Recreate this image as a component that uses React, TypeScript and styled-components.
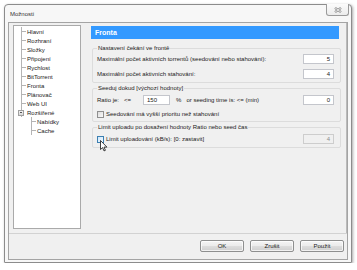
import React from 'react';
import styled, {createGlobalStyle} from 'styled-components';

const GlobalStyle = createGlobalStyle`
  * { box-sizing: border-box; }
  body {
    margin: 0;
    background: #fff;
    font-family: "Liberation Sans", Arial, sans-serif;
    font-size: 6px;
    color: #222;
  }
`;

const Page = styled.div`
  padding: 4px 0 0 4px;
`;

const Window = styled.div`
  width: 348px;
  height: 259px;
  border: 1px solid #8c8c8c;
  border-radius: 4px 4px 1px 1px;
  background: #f7f7f7;
  box-shadow: 1px 1px 3px rgba(0, 0, 0, .35);
  display: flex;
  flex-direction: column;
`;

const TitleBar = styled.div`
  height: 17px;
  display: flex;
  align-items: flex-start;
  padding-left: 5px;
  > .title {
    margin-top: 6px;
    line-height: 7px;
    color: #333;
  }
`;

const CloseButton = styled.div`
  margin-left: auto;
  margin-right: 2px;
  margin-top: -1px;
  width: 23px;
  height: 12px;
  border: 1px solid #9a9a9a;
  border-top: none;
  border-radius: 0 0 3px 3px;
  background: linear-gradient(#fbfbfb, #ececec);
  display: flex;
  align-items: center;
  justify-content: center;
`;

const Client = styled.div`
  flex: 1;
  margin: 0 3px 2px 3px;
  border: 1px solid #a4a4a4;
  background: #f0f0f0;
  display: flex;
  flex-direction: column;
`;

const Main = styled.div`
  height: 211px;
  display: flex;
  border-bottom: 1px solid #d2d2d2;
`;

const Tree = styled.div`
  width: 68px;
  margin: 2px 0 4px 4px;
  background: #fff;
  border: 1px solid #aaa;
  padding-top: 1px;
`;

const Branch = styled.div<{$indent: number}>`
  margin-left: ${p => p.$indent}px;
  border-left: 1px solid #b4b4b4;
`;

const TreeRow = styled.div`
  height: 9px;
  display: flex;
  align-items: center;
  white-space: nowrap;
`;

const Stub = styled.span`
  width: 4px;
  height: 1px;
  background: #b4b4b4;
  margin-right: 1px;
`;

const Expander = styled.span`
  width: 6px;
  height: 6px;
  margin-left: -4px;
  margin-right: 3px;
  border: 1px solid #a0a0a0;
  background: linear-gradient(#f4f4f4, #d8d8d8);
  display: flex;
  align-items: center;
  justify-content: center;
  &::after {
    content: "";
    width: 2px;
    height: 1px;
    background: #555;
  }
`;

const Content = styled.div`
  flex: 1;
  margin-left: 6px;
  padding: 3px 7px 0 4px;
  border-right: 1px solid #bababa;
`;

const Header = styled.div`
  height: 13px;
  background: #3399ff;
  color: #fff;
  font-weight: bold;
  font-size: 7px;
  line-height: 13px;
  padding-left: 4px;
`;

const Group = styled.fieldset<{$top: number}>`
  margin: ${p => p.$top}px -2px 0 1px;
  border: 1px solid #dcdcdc;
  border-radius: 2px;
  padding: 0 6px 3px 4px;
  min-inline-size: 0;
  > legend {
    padding: 0 1px;
    line-height: 8px;
    font-size: 6px;
  }
`;

const Rows = styled.div<{$top: number}>`
  display: flex;
  flex-direction: column;
  gap: 5px;
  padding-top: ${p => p.$top}px;
`;

const Row = styled.div`
  display: flex;
  align-items: center;
  min-height: 8px;
  white-space: nowrap;
`;

const Spin = styled.div<{$width?: number; $left?: boolean; $disabled?: boolean}>`
  width: ${p => p.$width ?? 31}px;
  height: 10px;
  margin-left: auto;
  border: 1px solid ${p => (p.$disabled ? '#cdcdcd' : '#c4c6cc')};
  background: ${p => (p.$disabled ? '#f0f0f0' : '#fff')};
  color: ${p => (p.$disabled ? '#8d8d8d' : '#222')};
  text-align: ${p => (p.$left ? 'left' : 'right')};
  padding: 0 3px;
  line-height: 8px;
`;

const RatioSpin = styled(Spin)`
  margin-left: 12px;
`;

const Label = styled.span<{$ml?: number}>`
  margin-left: ${p => p.$ml ?? 0}px;
`;

const CheckWrap = styled.span`
  position: relative;
  display: flex;
  margin-right: 2px;
`;

const CheckBox = styled.span<{$hover?: boolean}>`
  width: 7px;
  height: 7px;
  border: 1px solid ${p => (p.$hover ? '#3c7fb1' : '#8f8f8f')};
  background: ${p => (p.$hover
    ? 'linear-gradient(135deg, #cfe8fa, #f2f9ff)'
    : 'linear-gradient(135deg, #dcdcdc, #fafafa)')};
`;

const Cursor = styled.svg`
  position: absolute;
  left: 3px;
  top: 4px;
`;

const ButtonBar = styled.div`
  flex: 1;
  display: flex;
  justify-content: flex-end;
  align-items: flex-start;
  gap: 6px;
  padding: 6px 3px 0 0;
`;

const Button = styled.div`
  width: 44px;
  height: 12px;
  border: 1px solid #8e8f8f;
  border-radius: 2px;
  background: linear-gradient(#f4f4f4 0%, #ebebeb 50%, #dddddd 51%, #cfcfcf 100%);
  box-shadow: inset 0 0 0 1px rgba(255, 255, 255, .7);
  text-align: center;
  line-height: 10px;
  color: #222;
`;

const topItems = ['Hlavní', 'Rozhraní', 'Složky', 'Připojení', 'Rychlost', 'BitTorrent', 'Fronta', 'Plánovač', 'Web UI'];
const subItems = ['Nabídky', 'Cache'];

function App() {
  return (
    <Page>
      <GlobalStyle/>
      <Window>
        <TitleBar>
          <span className="title">Možnosti</span>
          <CloseButton>
            <svg width="8" height="6" viewBox="0 0 8 6">
              <path d="M1 0.8 L7 5.2 M7 0.8 L1 5.2" stroke="#8a8a8a" strokeWidth="2.2"/>
              <path d="M1 0.8 L7 5.2 M7 0.8 L1 5.2" stroke="#fff" strokeWidth="0.8"/>
            </svg>
          </CloseButton>
        </TitleBar>
        <Client>
          <Main>
            <Tree>
              <Branch $indent={7}>
                {topItems.map(name => (
                  <TreeRow key={name}><Stub/>{name}</TreeRow>
                ))}
                <TreeRow><Expander/>Rozšířené</TreeRow>
              </Branch>
              <Branch $indent={17}>
                {subItems.map(name => (
                  <TreeRow key={name}><Stub/>{name}</TreeRow>
                ))}
              </Branch>
            </Tree>

            <Content>
              <Header>Fronta</Header>

              <Group $top={5}>
                <legend>Nastavení čekání ve frontě</legend>
                <Rows $top={2}>
                  <Row>
                    <Label>Maximální počet aktivních torrentů (seedování nebo stahování):</Label>
                    <Spin>5</Spin>
                  </Row>
                  <Row>
                    <Label>Maximální počet aktivních stahování:</Label>
                    <Spin>4</Spin>
                  </Row>
                </Rows>
              </Group>

              <Group $top={1}>
                <legend>Seeduj dokud [výchozí hodnoty]</legend>
                <Rows $top={3}>
                  <Row>
                    <Label>Ratio je:</Label>
                    <Label $ml={5}>&lt;=</Label>
                    <RatioSpin $width={27} $left>150</RatioSpin>
                    <Label $ml={6}>%</Label>
                    <Label $ml={5}>or seeding time is: &lt;= (min)</Label>
                    <Spin>0</Spin>
                  </Row>
                  <Row>
                    <CheckWrap><CheckBox/></CheckWrap>
                    <Label>Seedování má vyšší prioritu než stahování</Label>
                  </Row>
                </Rows>
              </Group>

              <Group $top={1}>
                <legend>Limit uploadu po dosažení hodnoty Ratio nebo seed čas</legend>
                <Rows $top={3}>
                  <Row>
                    <CheckWrap>
                      <CheckBox $hover/>
                      <Cursor width="8" height="12" viewBox="0 0 8 12">
                        <path d="M0.5 0.5 L0.5 9.5 L2.6 7.6 L4 10.9 L5.4 10.3 L4 7.1 L6.9 7.1 Z"
                              fill="#fff" stroke="#111" strokeWidth="0.8" strokeLinejoin="round"/>
                      </Cursor>
                    </CheckWrap>
                    <Label>Limit uploadování (kB/s): [0: zastavit]</Label>
                    <Spin $disabled>4</Spin>
                  </Row>
                </Rows>
              </Group>
            </Content>
          </Main>

          <ButtonBar>
            <Button>OK</Button>
            <Button>Zrušit</Button>
            <Button>Použít</Button>
          </ButtonBar>
        </Client>
      </Window>
    </Page>
  );
}

export default App;
